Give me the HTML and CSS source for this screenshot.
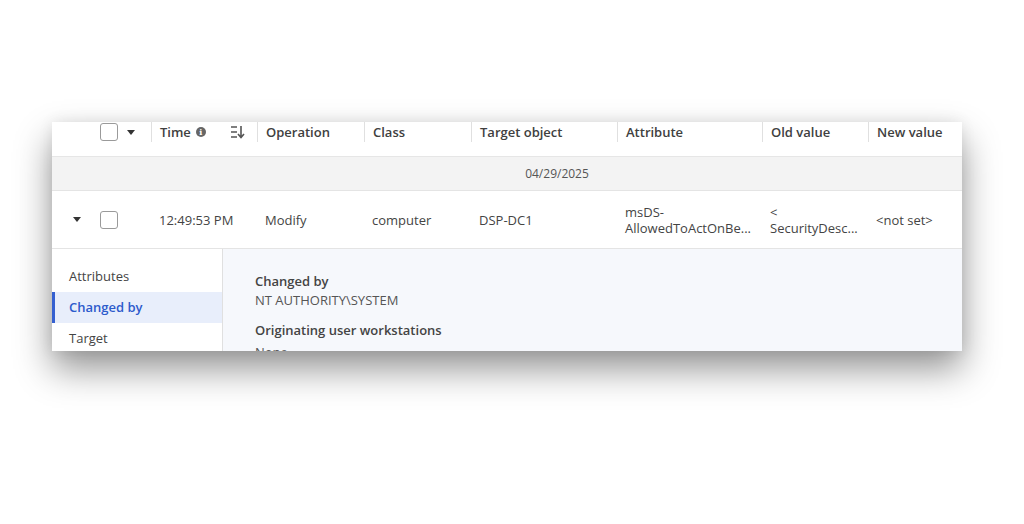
FILE: index.html
```html
<!DOCTYPE html>
<html>
<head>
  <meta charset="UTF-8">
  <title>Audit changes</title>
  <link rel="stylesheet" href="styles.css">
</head>
<body>
  <div class="card">
    <div class="row head">
      <div class="cell first">
        <span class="check"></span>
        <span class="caret"></span>
      </div>
      <div class="cell th time">
        Time <span class="info">i</span>
        <svg class="sort" width="15" height="14" viewBox="0 0 15 14">
          <path d="M1 2h6M1 7h6M1 12h6" stroke="#555" stroke-width="1.6"/>
          <path d="M11 1v11M8 9l3 3.5 3-3.5" stroke="#555" stroke-width="1.6" fill="none"/>
        </svg>
      </div>
      <div class="cell th">Operation</div>
      <div class="cell th">Class</div>
      <div class="cell th">Target object</div>
      <div class="cell th">Attribute</div>
      <div class="cell th">Old value</div>
      <div class="cell th">New value</div>
    </div>

    <div class="date-row">
      <span>04/29/2025</span>
    </div>

    <div class="row data">
      <div class="cell first">
        <span class="caret"></span>
        <span class="check"></span>
      </div>
      <div class="cell">12:49:53 PM</div>
      <div class="cell">Modify</div>
      <div class="cell">computer</div>
      <div class="cell">DSP-DC1</div>
      <div class="cell">msDS-<br>AllowedToActOnBe...</div>
      <div class="cell">&lt;<br>SecurityDesc...</div>
      <div class="cell">&lt;not set&gt;</div>
    </div>

    <div class="details">
      <div class="side">
        <a href="#">Attributes</a>
        <a href="#" class="active">Changed by</a>
        <a href="#">Target</a>
      </div>
      <div class="panel">
        <div class="label">Changed by</div>
        <div class="value">NT AUTHORITY\SYSTEM</div>
        <div class="label">Originating user workstations</div>
        <div class="value">None</div>
      </div>
    </div>
  </div>
</body>
</html>
```

FILE: styles.css
```css
* {
  margin: 0;
  padding: 0;
  box-sizing: border-box;
}

html, body {
  height: 100%;
}

body {
  background: white;
  font-family: "Open Sans", "Noto Sans", sans-serif;
  font-size: 13px;
  color: #444;
  padding-top: 122px;
}

.card {
  margin-left: 52px;
  width: 910px;
  height: 229px;
  overflow: hidden;
  background: white;
  box-shadow: 0 18px 34px rgba(0, 0, 0, 0.42), 0 0 14px rgba(0, 0, 0, 0.08);
}

.row {
  display: grid;
  grid-template-columns: 99px 106px 107px 107px 146px 145px 106px 94px;
}

.head {
  height: 35px;
  border-bottom: 1px solid #e6e6e6;
}

.cell {
  display: flex;
  align-items: center;
  padding-left: 8px;
  white-space: nowrap;
}

.th {
  height: 20px;
  border-left: 1px solid #e0e0e0;
  font-weight: 600;
  color: #404040;
}

.first {
  padding-left: 21px;
  gap: 9px;
}

.head .first {
  height: 20px;
  padding-left: 48px;
  gap: 9px;
}

.check {
  width: 18px;
  height: 18px;
  border: 1.5px solid #9a9a9a;
  border-radius: 3px;
  background: white;
}

.caret {
  width: 0;
  height: 0;
  border-left: 4px solid transparent;
  border-right: 4px solid transparent;
  border-top: 5px solid #333;
}

.info {
  display: inline-flex;
  align-items: center;
  justify-content: center;
  width: 10px;
  height: 10px;
  margin-left: 5px;
  border-radius: 50%;
  background: #666;
  color: white;
  font-size: 8px;
  font-weight: 700;
  font-family: "DejaVu Serif", serif;
}

.sort {
  margin-left: 24px;
}

.date-row {
  height: 34px;
  background: #f3f3f3;
  border-bottom: 1px solid #e4e4e4;
  display: flex;
  align-items: center;
  justify-content: center;
  padding-left: 100px;
  color: #555;
  font-size: 12px;
}

.data {
  height: 58px;
  border-bottom: 1px solid #e4e4e4;
}

.data .cell {
  line-height: 16px;
}

.data .first {
  padding-left: 21px;
  gap: 19px;
}

.details {
  display: flex;
  height: 110px;
}

.side {
  width: 171px;
  background: white;
  border-right: 1px solid #e0e0e0;
  padding-top: 12px;
}

.side a {
  display: block;
  height: 31px;
  line-height: 31px;
  padding-left: 14px;
  text-decoration: none;
  color: #444;
  border-left: 3px solid transparent;
}

.side a.active {
  background: #e8eefb;
  border-left-color: #3560d0;
  color: #2d5bcc;
  font-weight: 600;
}

.panel {
  flex: 1;
  background: #f6f8fc;
  padding: 23px 0 0 32px;
}

.label {
  font-weight: 600;
  color: #444;
  line-height: 19px;
}

.value {
  color: #555;
  line-height: 19px;
  margin-bottom: 11px;
}

.label + .value + .label + .value {
  margin-top: 3px;
}
```
